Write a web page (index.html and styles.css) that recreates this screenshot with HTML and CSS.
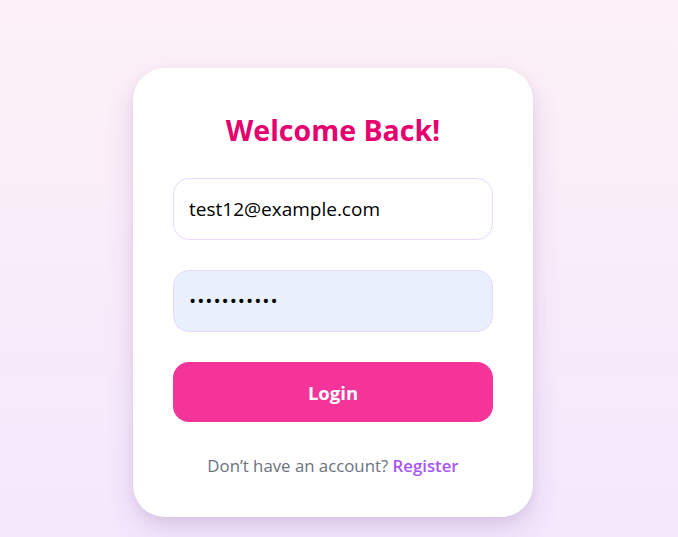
FILE: index.html
```html
<!DOCTYPE html>
<html lang="en">
<head>
<meta charset="utf-8">
<title>Login</title>
<link rel="stylesheet" href="styles.css">
</head>
<body>
<main class="page">
  <form class="card">
    <h1 class="title">Welcome Back!</h1>
    <input class="field" type="email" value="test12@example.com">
    <input class="field field-filled" type="password" value="password123">
    <button class="btn" type="button">Login</button>
    <p class="foot">Don’t have an account? <a class="link" href="#">Register</a></p>
  </form>
</main>
</body>
</html>
```

FILE: styles.css
```css
* { box-sizing: border-box; }
html, body { margin: 0; height: 100%; }
body {
  font-family: "Open Sans", "Noto Sans", sans-serif;
  background: linear-gradient(180deg, #fdf1f7 0%, #f4e8fd 100%);
}
.page {
  min-height: 100%;
  display: flex;
  justify-content: center;
  align-items: flex-start;
  padding: 68px 12px 0 0;
}
.card {
  width: 400px;
  background: #fff;
  border-radius: 32px;
  padding: 40px 40px 37px;
  box-shadow: 0 12px 28px rgba(120, 80, 150, 0.18), 0 4px 10px rgba(120, 80, 150, 0.08);
  display: flex;
  flex-direction: column;
}
.card > * { flex-shrink: 0; }
.title {
  margin: 0 0 26px;
  font-size: 28.5px;
  line-height: 44px;
  font-weight: 700;
  text-align: center;
  color: #e6006f;
}
.field {
  display: block;
  width: 100%;
  height: 62px;
  border: 1px solid #ead7ff;
  border-radius: 16px;
  padding: 0 15px;
  font-family: inherit;
  font-size: 19px;
  color: #000;
  background: #fff;
  outline: none;
  margin-bottom: 30px;
}
.field-filled { background: #e8effd; letter-spacing: 1px; }
.btn {
  display: block;
  width: 100%;
  height: 60px;
  border: none;
  border-radius: 16px;
  background: #f5349a;
  color: #fff;
  font-family: inherit;
  font-size: 18.5px;
  font-weight: 700;
}
.foot {
  margin: 30px 0 0;
  text-align: center;
  font-size: 16.8px;
  line-height: 28px;
  color: #6b7280;
}
.link {
  color: #a855f7;
  font-weight: 600;
  text-decoration: none;
}
```
